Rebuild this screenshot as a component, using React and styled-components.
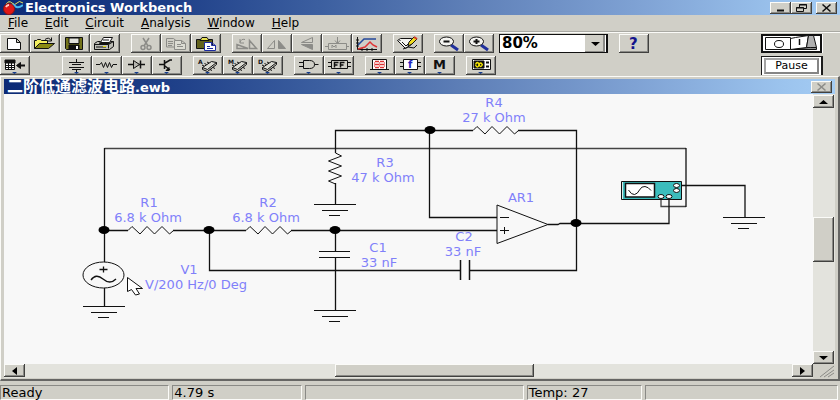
import React from "react"
import styled, { createGlobalStyle, ThemeProvider } from "styled-components"

const theme = {
  colors: {
    face: "#d0cfc7",
    light: "#fbfbf8",
    shadow: "#8a8a86",
    dark: "#41413f",
    track: "#e3e3dd",
    canvas: "#f8f8f8",
    label: "#8080fa",
    titleGradient:
      "linear-gradient(90deg, #0c2a76 0%, #1e3f88 20%, #3c5fa0 38%, #5f80b8 56%, #7fa2d4 76%, #9cc4ee 94%, #a4ccf4 100%)",
  },
}

const GlobalStyle = createGlobalStyle`
  * {
    box-sizing: border-box;
  }
  body {
    margin: 0;
    font-family: "DejaVu Sans", "Noto Sans CJK SC", sans-serif;
    color: #000;
  }
  button, select {
    font-family: inherit;
    color: inherit;
  }
`

const Window = styled.div`
  display: flex;
  flex-direction: column;
  min-height: 100vh;
  background: ${(props) => props.theme.colors.face};
`

const TitleBar = styled.header`
  display: flex;
  align-items: center;
  gap: 2px;
  height: 15px;
  padding: 0 3px;
  background: ${(props) => props.theme.colors.titleGradient};
  color: #fff;
`

const Title = styled.h1`
  flex: 1;
  margin: 0;
  font-size: 13px;
  line-height: 15px;
  font-weight: bold;
  white-space: nowrap;
`

const Bevel = styled.button`
  display: flex;
  align-items: center;
  justify-content: center;
  flex: none;
  padding: 0;
  border: 0;
  background: ${(props) => props.theme.colors.face};
  box-shadow: inset -1px -1px ${(props) => props.theme.colors.dark},
    inset 1px 1px ${(props) => props.theme.colors.light},
    inset -2px -2px ${(props) => props.theme.colors.shadow};
`

const CaptionButton = styled(Bevel)`
  width: 21px;
  height: 12px;
  margin-left: ${(props) => (props.$apart ? "2px" : "-2px")};
`

const MenuBar = styled.nav`
  display: flex;
  gap: 17px;
  height: 18px;
  padding: 0 8px;
  border-bottom: 1px solid ${(props) => props.theme.colors.light};
  box-shadow: inset 0 -1px #a9a9a3;
`

const MenuItem = styled.button`
  padding: 0;
  border: 0;
  background: none;
  font-size: 12px;
  line-height: 17px;

  &::first-letter {
    text-decoration: underline;
  }
`

const Toolbar = styled.div`
  display: flex;
  gap: 11px;
  height: 19px;
  margin-top: ${(props) => (props.$second ? "3px" : "1px")};
  padding-right: 17px;
`

const Group = styled.div`
  display: flex;
  margin-right: ${(props) => (props.$wide ? "21px" : "0")};
`

const ToolButton = styled(Bevel)`
  width: 30px;
  height: 19px;
`

const Zoom = styled.label`
  display: flex;
  width: 109px;
  height: 19px;
  margin-left: -6px;
  padding-right: 1px;
  border: 1px solid #111;
  border-right-width: 2px;
  background: #fff;
`

const ZoomSelect = styled.select`
  flex: 1;
  min-width: 0;
  padding: 0 2px;
  border: 0;
  appearance: none;
  background: none;
  font-size: 15px;
  line-height: 17px;
  font-weight: bold;
`

const ZoomArrow = styled.span`
  display: flex;
  align-items: center;
  justify-content: center;
  width: 20px;
  background: ${(props) => props.theme.colors.face};
  box-shadow: inset -2px -1px ${(props) => props.theme.colors.shadow};
`

const PowerButton = styled.button`
  display: flex;
  flex: none;
  width: 62px;
  height: 19px;
  margin-left: auto;
  padding: 0;
  border: 0;
  background: #fff;
`

const PauseButton = styled.button`
  flex: none;
  width: 62px;
  height: 19px;
  margin-left: auto;
  padding: 1px 2px;
  border: 2px solid #1c1c1c;
  border-width: 1px 2px 0 1px;
  background: #fff;
`

const PauseFace = styled.span`
  display: block;
  border: 2px solid #a3a3a3;
  border-right-color: #858585;
  border-bottom-color: #858585;
  font-size: 11px;
  line-height: 12px;
`

const Child = styled.section`
  display: flex;
  flex-direction: column;
  flex: 1;
  margin-top: 1px;
  padding: 2px 3px 1px 3px;
  border: 1px solid ${(props) => props.theme.colors.light};
  border-right: 2px solid #666664;
  border-bottom: 2px solid #666664;
`

const ChildTitle = styled.h2`
  flex: 1;
  margin: 0;
  font-size: 13px;
  line-height: 15px;
  font-weight: bold;
  white-space: nowrap;
`

const Han = styled.span`
  font-family: "Noto Sans CJK SC", sans-serif;
  font-size: 16px;
  line-height: 15px;
`

const Body = styled.div`
  display: grid;
  grid-template-columns: 1fr 22px;
  grid-template-rows: 1fr 14px;
  flex: 1;
`

const Canvas = styled.main`
  overflow: hidden;
  background: ${(props) => props.theme.colors.canvas};
`

const Track = styled.div`
  display: flex;
  flex-direction: ${(props) => (props.$vertical ? "column" : "row")};
  padding-top: ${(props) => (props.$vertical ? "1px" : "0")};
  background: ${(props) => props.theme.colors.track};
`

const Space = styled.div`
  flex: ${(props) => props.$grow} 1 0;
`

const ScrollButton = styled(Bevel)`
  width: 21px;
  height: 13px;
`

const Thumb = styled.div`
  flex: ${(props) => props.$grow} 1 0;
  margin-right: ${(props) => (props.$vertical ? "1px" : "0")};
  margin-bottom: ${(props) => (props.$vertical ? "0" : "1px")};
  background: ${(props) => props.theme.colors.face};
  box-shadow: inset -1px -1px ${(props) => props.theme.colors.dark},
    inset 1px 1px ${(props) => props.theme.colors.light},
    inset -2px -2px ${(props) => props.theme.colors.shadow};
`

const StatusBar = styled.footer`
  display: flex;
  gap: 3px;
  padding: 4px 2px 0 0;
`

const Pane = styled.div`
  flex: ${(props) => props.$grow} 1 0;
  height: 15px;
  padding-left: 1px;
  border: 1px solid ${(props) => props.theme.colors.shadow};
  border-right-color: ${(props) => props.theme.colors.light};
  border-bottom-color: ${(props) => props.theme.colors.light};
  font-size: 13px;
  line-height: 14px;
  white-space: nowrap;
`

const Drawing = styled.svg`
  display: block;
  flex: none;
  fill: none;
  stroke: #111;
  stroke-width: 1;
`

const LabelText = styled.text`
  fill: ${(props) => props.theme.colors.label};
  stroke: none;
  font-size: 13px;
  text-anchor: middle;
`

const Mark = styled.text`
  fill: ${(props) => props.$color || "#111"};
  stroke: none;
  font-size: ${(props) => props.$size}px;
  font-weight: bold;
`

const Drop = () => <path d="M12 16h5l-2.5 2z" fill="#123a8c" stroke="none" />

const Chip = ({ letter }) => (
  <>
    <Mark x="5" y="8" $size={6}>
      {letter}
    </Mark>
    <path d="M9.500 11.500l9-6 5 1-9 7z" fill="#dcdcd4" />
    <path d="M9.500 11.500v2l5 2 9-7v-2M11 10l-2-1M13.500 8.500l-2-1M16 7l-2-1M17 13.500l2 1M20 11.500l2 1" />
    <Drop />
  </>
)

const gray = { stroke: "#8c8c88", fill: "none" }

const icons = {
  fresh: <path d="M7.500 4.500h9l4 4v7h-13zM16.500 4.500v4h4" fill="#fff" />,
  open: (
    <>
      <path d="M4.500 14.500v-8h2l1-1h3l1 1h6v3" fill="#f5f060" />
      <path d="M4.500 14.500l5-5h15l-6 5z" fill="#8b8a12" />
      <path d="M15 5.500q4-3 6 1M21.500 3.500v3.500h-4" />
    </>
  ),
  save: (
    <>
      <path d="M5.500 3.500h17v12h-16l-1-1z" fill="#73731a" />
      <path d="M9 4h10v5.500H9z" fill="#e2e2db" />
      <path d="M9 11h10v4.500H9z" fill="#111" />
      <path d="M16 12h2v3h-2z" fill="#fff" stroke="none" />
    </>
  ),
  print: (
    <>
      <path d="M10.500 8.500l3-5h9l-3 5z" fill="#fff" />
      <path d="M4.500 9.500l3-2h3l-1 2h10l1-2h3v5l-4 3h-15z" fill="#bebeb7" />
      <path d="M4.500 10.500h14v4M18.500 10.500l5-3M13 6h6M6 13h10" />
      <path d="M13 12.500h3" stroke="#e6d800" />
    </>
  ),
  cut: (
    <g {...gray} strokeWidth="1.500">
      <path d="M12 4l5 8M18 4l-5 8" />
      <circle cx="12" cy="13.500" r="2" />
      <circle cx="18" cy="13.500" r="2" />
    </g>
  ),
  copy: (
    <g {...gray}>
      <path d="M5.500 4.500h7l3 2.500v6h-10zM7 7.500h5M7 9.500h5M7 11.500h4" />
      <path d="M13.500 6.500h7l4 3v6h-11zM20.500 6.500v3h4M16 10.500h4M16 12.500h6" fill="#dcdcd4" />
    </g>
  ),
  paste: (
    <>
      <path d="M5.500 5.500h16v9h-16z" fill="#62621c" />
      <path d="M9 6.500l2-3h5l2 3z" fill="#e7e052" />
      <path d="M13.500 8.500h7l4 3v5h-11zM20.500 8.500v3h4M16 12.500h3M16 14.500h6" fill="#fff" stroke="#1c2ba0" />
    </>
  ),
  rotate: (
    <g {...gray}>
      <path d="M5 14.500h11l-11-4zM17.500 14.500v-8l7 8z" strokeWidth="1.500" />
      <path d="M13 5.500q-4-1-5 3M8 5v4h4" />
    </g>
  ),
  flipH: (
    <g {...gray}>
      <path d="M5.500 14.500h7v-8z" />
      <path d="M16.500 6.500v8h7z" fill="#8c8c88" />
    </g>
  ),
  flipV: (
    <g {...gray}>
      <path d="M9.500 8.500l11-5v5z" />
      <path d="M9.500 10.500h11v5z" fill="#8c8c88" />
    </g>
  ),
  subcircuit: (
    <g {...gray}>
      <path d="M15.500 3v6M13 6.500l2.500 3 2.500-3M6.500 9.500h18v6h-18zM3 12.500h3M25 12.500h2" />
      <path d="M10 14v-3l2 2 2-2v3" />
    </g>
  ),
  graph: (
    <>
      <path d="M5.500 3v12.500H25M4 6h3M4 9h3M4 12h3M10 14v3M15 14v3M20 14v3" />
      <path d="M6 11l6-6h12" stroke="#23489a" strokeWidth="1.500" />
      <path d="M6 15l7-2 5-5 3 3 4 2" stroke="#e03434" strokeWidth="1.500" />
    </>
  ),
  properties: (
    <>
      <path d="M4.500 6.500l3-2h11v6l-6 4z" fill="#f4f4f0" />
      <path d="M9 8l4 4 5-5M10 15l5-2 6 1 3-3M7 6v1" />
      <path d="M15 12l1-4 5-5 3 2-5 5z" fill="#f0dc22" />
      <path d="M21 3l3 2" stroke="#d83c28" strokeWidth="2" />
    </>
  ),
  zoomOut: (
    <>
      <path d="M17 11l7 5" stroke="#20309c" strokeWidth="3" />
      <ellipse cx="12.500" cy="7.500" rx="7" ry="4.500" fill="#f4f4f0" />
      <path d="M9.500 7.500h6" strokeWidth="2" />
    </>
  ),
  zoomIn: (
    <>
      <path d="M17 11l7 5" stroke="#20309c" strokeWidth="3" />
      <ellipse cx="12.500" cy="7.500" rx="7" ry="4.500" fill="#f4f4f0" />
      <path d="M9.500 7.500h6M12.500 5v5" strokeWidth="2" />
    </>
  ),
  help: (
    <Mark x="10" y="15" $size={15} $color="#14148c">
      ?
    </Mark>
  ),
  parts: (
    <>
      <path d="M5.500 4.500h9v9h-9z" fill="#fff" />
      <path d="M5 4h10v3H5zM5 9.500h10M5 11.500h10M8.500 6v8M11.500 6v8" fill="#111" />
      <path d="M18 9.500h7" strokeWidth="2" />
      <path d="M16.500 9.500l4-3v6z" fill="#111" />
      <Drop />
    </>
  ),
  battery: (
    <>
      <path d="M14.500 3v3M14.500 13v3M7 6.500h15M10 8.500h9M7 11.500h15M10 13.500h9" />
      <Drop />
    </>
  ),
  resistor: (
    <>
      <path d="M4 8.500h4l1.500-2 2 5 2-5 2 5 2-5 2 5 1.500-3H25" />
      <Drop />
    </>
  ),
  diode: (
    <>
      <path d="M6 8.500h17M18.500 4.500v8" strokeWidth="1.500" />
      <path d="M11.500 4.500v8l6-4z" fill="#b5b5af" />
      <Drop />
    </>
  ),
  transistor: (
    <>
      <path d="M7 8.500h5M12.500 4v9M13 7l5-3h2M13 10l5 4" strokeWidth="1.500" />
      <path d="M17 11.500v3h-3z" fill="#111" />
      <Drop />
    </>
  ),
  analog: <Chip letter="A" />,
  mixed: <Chip letter="M" />,
  digital: <Chip letter="D" />,
  gate: (
    <>
      <path d="M9.500 4.500h6q5 0 5 4t-5 4h-6zM5 6.500h4M5 10.500h4M20.500 8.500h4" />
      <Drop />
    </>
  ),
  flipflop: (
    <>
      <path d="M7.500 4.500h16v8h-16zM4 6.500h3M4 10.500h3M24 6.500h3M24 10.500h3" />
      <path d="M10.500 11.500v-5h4M10.500 9h3M16.500 11.500v-5h4M16.500 9h3" strokeWidth="1.500" />
      <Drop />
    </>
  ),
  indicator: (
    <>
      <path d="M7.500 3.500h14v10h-14zM5 13.500h19" fill="#fff" />
      <path d="M10 5.500h4M15 5.500h4M10 8.500h4M15 8.500h4M10 11.500h4M15 11.500h4" stroke="#dd3333" strokeWidth="1.500" />
      <path d="M9.500 6v5M14.500 6v5M19.500 6v5" stroke="#ee8888" />
      <Drop />
    </>
  ),
  controls: (
    <>
      <path d="M8.500 3.500h14v10h-14zM5 6.500h3M5 10.500h3M23 6.500h3M23 10.500h3" fill="#fff" />
      <Mark x="13" y="12" $size={10} $color="#2222c0">
        f
      </Mark>
      <Drop />
    </>
  ),
  misc: (
    <>
      <Mark x="8" y="13" $size={13}>
        M
      </Mark>
      <Drop />
    </>
  ),
  instruments: (
    <>
      <path d="M6.500 3.500h18v10h-18z" fill="#fff" />
      <path d="M8 5h10v7H8z" fill="#111" />
      <path d="M9.500 8.500q2-4 3.500 0t3.500 0M9.500 9q2 4 3.500 0t3.500 0" stroke="#f2e300" strokeWidth="1.500" />
      <path d="M20 6.500h3M20 10.500h3" strokeWidth="2" />
      <Drop />
    </>
  ),
}

const fileTools = [
  [["fresh", "New"], ["open", "Open"], ["save", "Save"], ["print", "Print"]],
  [["cut", "Cut"], ["copy", "Copy"], ["paste", "Paste"]],
  [
    ["rotate", "Rotate"],
    ["flipH", "Flip horizontal"],
    ["flipV", "Flip vertical"],
    ["subcircuit", "Create subcircuit"],
    ["graph", "Display graphs"],
  ],
  [["properties", "Component properties"]],
  [["zoomOut", "Zoom out"], ["zoomIn", "Zoom in"]],
]

const partTools = [
  [["parts", "Favorites"]],
  [
    ["battery", "Sources"],
    ["resistor", "Basic"],
    ["diode", "Diodes"],
    ["transistor", "Transistors"],
  ],
  [["analog", "Analog ICs"], ["mixed", "Mixed ICs"], ["digital", "Digital ICs"]],
  [["gate", "Logic gates"], ["flipflop", "Digital"]],
  [["indicator", "Indicators"], ["controls", "Controls"], ["misc", "Miscellaneous"]],
  [["instruments", "Instruments"]],
]

const Tool = ({ icon, label }) => (
  <ToolButton type="button" aria-label={label}>
    <Drawing width="30" height="19" viewBox="0 0 30 19">
      {icons[icon]}
    </Drawing>
  </ToolButton>
)

const ToolGroup = ({ tools, wide }) => (
  <Group $wide={wide}>
    {tools.map(([icon, label]) => (
      <Tool key={icon} icon={icon} label={label} />
    ))}
  </Group>
)

const arrows = {
  up: "M1 6h9L5.500 2z",
  down: "M1 2h9L5.500 6z",
  left: "M8 0v8L3 4z",
  right: "M3 0v8l5-4z",
}

const Arrow = ({ to }) => (
  <Drawing width="11" height="8" viewBox="0 0 11 8">
    <path d={arrows[to]} fill="#000" stroke="none" />
  </Drawing>
)

const CloseIcon = ({ color }) => (
  <Drawing width="11" height="8" viewBox="0 0 11 8">
    <path d="M1.500 0.500l8 7M9.500 0.500l-8 7" stroke={color} strokeWidth="1.500" />
  </Drawing>
)

const Logo = () => (
  <Drawing width="20" height="15" viewBox="0 0 20 15">
    <path d="M3 4q3-4 6-1t5 0 6 0" stroke="#e8e05a" />
    <path d="M6 8q3-5 6-2t8-1" stroke="#48b8f0" strokeWidth="2" />
    <circle cx="6" cy="9" r="5.500" fill="#e01818" stroke="#8c1414" />
    <path d="M3 7q1-2 3-2" stroke="#ffd0c8" strokeWidth="2" />
  </Drawing>
)

const Ground = ({ x, y }) => (
  <path d={`M${x - 21} ${y}h42M${x - 13} ${y + 6}h26M${x - 6} ${y + 11}h11`} />
)

const Resistor = ({ x, y }) => (
  <path d={`M${x} ${y}l4-4 8 7.500 7-7.500 7.500 7.500 7.500-7.500 7.500 7.500 4-3.500`} />
)

const labels = [
  [149, 207, "R1"],
  [148, 222, "6.8 k Ohm"],
  [268, 207, "R2"],
  [266, 222, "6.8 k Ohm"],
  [385, 167, "R3"],
  [383, 182, "47 k Ohm"],
  [378, 252, "C1"],
  [379, 267, "33 nF"],
  [464, 241, "C2"],
  [463, 256, "33 nF"],
  [494, 107, "R4"],
  [494, 122, "27 k Ohm"],
  [521, 202, "AR1"],
  [189, 274, "V1"],
  [196, 289, "V/200 Hz/0 Deg"],
]

const nodes = [
  [104, 230],
  [209, 230],
  [335, 230],
  [430, 130],
  [576, 223],
]

const Schematic = () => (
  <Drawing width="808" height="270" viewBox="4 94 808 270">
    {/* wires */}
    <g strokeWidth="1.300">
      <path d="M104.500 148.500H686M686 206.500H661V198" stroke="#444" />
      <path d="M104.500 148V262M104.500 288V306M686 148V207" />
      <path d="M104 230.500H128M173 230.500H246M291 230.500H497" />
      <path d="M209.500 230V270.500H460.500M469.500 270.500H576.500V130.500H518" />
      <path d="M335.500 153V130.500H473M429.500 130V217.500H497M335.500 183V204" />
      <path d="M335.500 230V251M335.500 257V310" />
      <path d="M548 224.500H558L560 223.500H669V198M679 185.500H745V217" />
    </g>
    {/* parts */}
    <Resistor x={128} y={230.5} />
    <Resistor x={246} y={230.5} />
    <Resistor x={473} y={130.5} />
    <path d="M335.500 153l6 3-13 5 13 5-13 5 13 5-13 5 7 3" />
    <path d="M319 251.500H350M319 257.500H350" />
    <path d="M460.500 260V280M469.500 260V280" strokeWidth="1.500" />
    <path d="M497 205L548 224.500 497 243.500zM500 217.500h9M500 230.500h9M504.500 227v7" />
    <Ground x={104} y={306.5} />
    <Ground x={335} y={204.5} />
    <Ground x={335} y={310.5} />
    <Ground x={744} y={217.5} />
    <ellipse cx="103.500" cy="275" rx="20.500" ry="13" />
    <path d="M99.500 269.500h8M103.500 266.500v6M91 280q5-7 12-1t13 0" strokeWidth="1.300" />
    {nodes.map(([x, y]) => (
      <ellipse key={`${x}-${y}`} cx={x} cy={y} rx="5.500" ry="4" fill="#000" stroke="none" />
    ))}
    {/* oscilloscope */}
    <path d="M621.500 181.500h60v18h-60z" fill="#3cbcbc" />
    <path d="M622.500 182v17" stroke="#d8e8e8" />
    <path d="M625.500 183.500h29v13.500h-29z" fill="#fff" strokeWidth="1.500" />
    <path d="M628.500 190q3 5 6 4.500t5-4.500 5.500-3.500 6 4" />
    <g fill="#fff">
      <ellipse cx="676.500" cy="185.500" rx="3" ry="2" />
      <ellipse cx="676.500" cy="190.500" rx="3" ry="2" />
      <ellipse cx="661" cy="196.500" rx="3" ry="2" />
      <ellipse cx="669" cy="196.500" rx="3" ry="2" />
    </g>
    {labels.map(([x, y, text]) => (
      <LabelText key={`${x}-${y}`} x={x} y={y}>
        {text}
      </LabelText>
    ))}
    {/* mouse pointer */}
    <path d="M127.500 277.500v14l4-2 4 5.500 4-1-3.500-5.500h6.500z" fill="#fff" />
  </Drawing>
)

const App = () => {
  return (
    <ThemeProvider theme={theme}>
      <GlobalStyle />
      <Window>
        <TitleBar>
          <Logo />
          <Title>Electronics Workbench</Title>
          <CaptionButton type="button" aria-label="Minimize">
            <Drawing width="11" height="8" viewBox="0 0 11 8">
              <path d="M2 6.500h7" strokeWidth="2" />
            </Drawing>
          </CaptionButton>
          <CaptionButton type="button" aria-label="Restore">
            <Drawing width="11" height="8" viewBox="0 0 11 8">
              <path d="M3.500 3V0.500h7v4H8M3 1h8M0.500 3.500h7v4h-7zM0 4h8" />
            </Drawing>
          </CaptionButton>
          <CaptionButton type="button" aria-label="Close" $apart>
            <CloseIcon color="#111" />
          </CaptionButton>
        </TitleBar>

        <MenuBar>
          {["File", "Edit", "Circuit", "Analysis", "Window", "Help"].map((item) => (
            <MenuItem key={item} type="button">
              {item}
            </MenuItem>
          ))}
        </MenuBar>

        <Toolbar>
          {fileTools.map((tools) => (
            <ToolGroup key={tools[0][0]} tools={tools} />
          ))}
          <Zoom>
            <ZoomSelect aria-label="Zoom" defaultValue="80%">
              <option>50%</option>
              <option>80%</option>
              <option>100%</option>
            </ZoomSelect>
            <ZoomArrow>
              <Arrow to="down" />
            </ZoomArrow>
          </Zoom>
          <Tool icon="help" label="Help" />
          <PowerButton type="button" aria-label="Activate simulation">
            <Drawing width="62" height="19" viewBox="0 0 62 19">
              <path d="M1 1h59v17H1z" strokeWidth="2" />
              <path d="M4.500 3.500h25v12h-25z" />
              <ellipse cx="18" cy="10" rx="4.500" ry="3.500" />
              <path d="M29.500 15.500l18-2 8 0v2z" fill="#8c8c8c" />
              <path d="M29.500 4.500l5-1 13-2-2 12-16 2z" fill="#fff" />
              <path d="M47.500 1.500h5l3 12h-6l-4 0z" fill="#b0b0b0" />
              <path d="M38.500 5v6" strokeWidth="1.500" />
            </Drawing>
          </PowerButton>
        </Toolbar>

        <Toolbar $second>
          {partTools.map((tools, i) => (
            <ToolGroup key={tools[0][0]} tools={tools} wide={i === 0} />
          ))}
          <PauseButton type="button">
            <PauseFace>Pause</PauseFace>
          </PauseButton>
        </Toolbar>

        <Child>
          <TitleBar>
            <ChildTitle>
              <Han>二阶低通滤波电路</Han>.ewb
            </ChildTitle>
            <CaptionButton type="button" aria-label="Close circuit">
              <CloseIcon color="#8c8c88" />
            </CaptionButton>
          </TitleBar>
          <Body>
            <Canvas>
              <Schematic />
            </Canvas>
            <Track $vertical>
              <ScrollButton type="button" aria-label="Scroll up">
                <Arrow to="up" />
              </ScrollButton>
              <Space $grow={109} />
              <Thumb $grow={46} $vertical />
              <Space $grow={89} />
              <ScrollButton type="button" aria-label="Scroll down">
                <Arrow to="down" />
              </ScrollButton>
            </Track>
            <Track>
              <ScrollButton type="button" aria-label="Scroll left">
                <Arrow to="left" />
              </ScrollButton>
              <Space $grow={310} />
              <Thumb $grow={198} />
              <Space $grow={258} />
              <ScrollButton type="button" aria-label="Scroll right">
                <Arrow to="right" />
              </ScrollButton>
            </Track>
            <Drawing width="22" height="14" viewBox="0 0 22 14">
              <path d="M0 0h22v14H0z" fill="#d0cfc7" stroke="none" />
              <path d="M7 13l14-11M11 13l10-7M15 13l6-4" stroke="#8a8a86" />
            </Drawing>
          </Body>
        </Child>

        <StatusBar>
          <Pane $grow={170}>Ready</Pane>
          <Pane $grow={129}>4.79 s</Pane>
          <Pane $grow={221}>&nbsp;</Pane>
          <Pane $grow={115}>Temp: 27</Pane>
          <Pane $grow={194}>&nbsp;</Pane>
        </StatusBar>
      </Window>
    </ThemeProvider>
  )
}

export default App
